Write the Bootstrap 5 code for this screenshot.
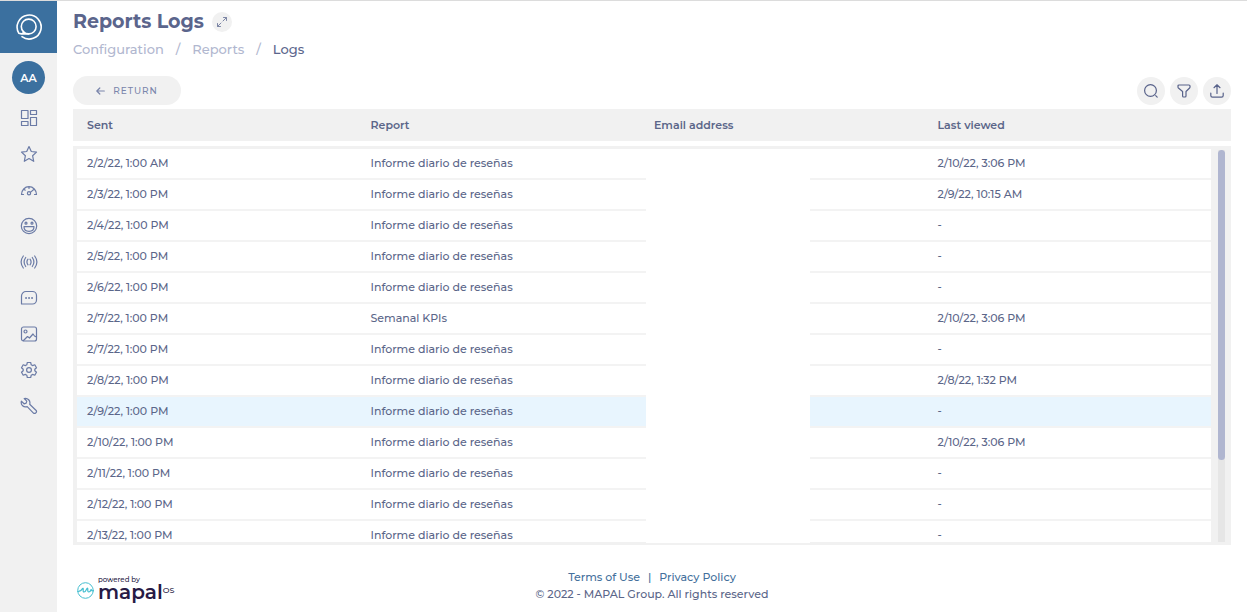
<!DOCTYPE html>
<html lang="en">
<head>
<meta charset="utf-8">
<meta name="viewport" content="width=device-width, initial-scale=1">
<title>Reports Logs</title>
<link href="https://cdn.jsdelivr.net/npm/bootstrap@5.3.0/dist/css/bootstrap.min.css" rel="stylesheet">
<style>
:root { --ink: #5b6689; --soft: #b1b7cf; --panel: #f1f1f1; --brand: #3b709f; }
body { font-family: Montserrat, Inter, "Liberation Sans", sans-serif; font-size: 11px; font-weight: 500; line-height: 16px; color: var(--ink); background: #fff; border-top: 1px solid #dcdcdc; }
svg { fill: none; stroke: currentColor; stroke-width: 1.2; stroke-linecap: round; stroke-linejoin: round; display: block; }
a { color: inherit; text-decoration: none; }
.side { width: 57px; background: var(--panel); }
.side-logo { height: 52px; background: var(--brand); color: #fff; }
.avatar { width: 33px; height: 33px; background: var(--brand); color: #fff; font-weight: 600; margin-top: 8px; margin-bottom: 6px; }
.side-link { height: 36px; color: #6b7ba6; }
.page-title { font-size: 19px; line-height: 24px; font-weight: 700; color: #5b658c; }
.crumbs { font-size: 13px; font-weight: 500; line-height: 16px; color: var(--soft); --bs-breadcrumb-divider-color: var(--soft); --bs-breadcrumb-item-padding-x: 12px; --bs-breadcrumb-font-size: 13px; --bs-breadcrumb-item-active-color: #5b658c; }
.page-head { padding-top: 9px; }
.crumb-nav { margin-top: 7px; }
.round-btn { width: 28px; height: 28px; background: var(--panel); color: #58628a; }
.tool-group { gap: 5px; }
.expand-btn { width: 20px; height: 20px; background: var(--panel); color: #7d86a5; }
.return-btn { width: 108px; height: 29px; background: var(--panel); color: #7a85ab; font-size: 9px; font-weight: 500; letter-spacing: 1px; }
.tools { margin-top: 19px; margin-bottom: 4px; }
.log-table { table-layout: fixed; margin: 0; color: inherit; border-collapse: separate; border-spacing: 0; width: 100%; }
.log-table th, .log-table td { padding: 0 0 0 10px; vertical-align: middle; text-align: left; }
.head-bar { background: var(--panel); padding: 0 20px 0 4px; margin-bottom: 5px; }
.head-bar th { height: 32px; font-weight: 600; }
.log-panel { background: var(--panel); padding: 3px 5px 3px 4px; min-height: 0; }
.log-view { background: #fff; min-height: 0; }
.log-table td { height: 31px; padding-bottom: 2px; border-bottom: 2px solid #f3f3f3; }
.log-view .picked td { background: #e8f5fe; }
.email-cover { top: 3px; bottom: 2px; left: calc(50% - 6px); width: 164px; background: #fff; }
.track { width: 7px; background: #e6e6e6; margin: 1px 1px 0 7px; }
.thumb { height: 79%; background: #b0b6d0; border-radius: 4px; }
.foot { height: 68px; padding-top: 24px; line-height: 17px; }
.foot-links { color: #44709c; }
.brand-mark { left: 4px; top: 31px; color: #271a45; }
.brand-small { font-size: 7px; line-height: 8px; }
.brand-word { font-size: 20px; line-height: 16px; font-weight: 600; }
.brand-os { font-size: 8px; line-height: 10px; font-weight: 500; margin-top: 1px; }
.wave { color: #46bfd0; margin-top: 6px; }
</style>
</head>
<body>
<div class="d-flex vh-100 overflow-hidden">
  <aside class="side flex-shrink-0">
    <a href="#" class="side-logo d-flex align-items-center justify-content-center" aria-label="Home">
      <svg width="28" height="28" viewBox="0 0 28 28"><path stroke-width="1.6" d="M7 23.700A12 12 0 1 0 3.900 20.300L6.300 20.900H13.700M6.300 20.900Q8.600 20.300 8.500 18.500"/><circle stroke-width="1.6" cx="13.700" cy="13.500" r="7.400"/></svg>
    </a>
    <div class="avatar rounded-circle d-flex align-items-center justify-content-center mx-auto">AA</div>
    <nav aria-label="Main">
      <a href="#" class="side-link d-flex align-items-center justify-content-center" aria-label="Dashboard"><svg width="18" height="18" viewBox="0 0 18 18"><path d="M1.500 1.500h6.500v8h-6.500zM10.500 1.500h6v4h-6zM1.500 12.500h6.500v4h-6.500zM10.500 8.500h6v8h-6z"/></svg></a>
      <a href="#" class="side-link d-flex align-items-center justify-content-center" aria-label="Favourites"><svg width="18" height="18" viewBox="0 0 18 18"><path d="M9 1.500l2.300 5 5.200.6-3.900 3.600 1.100 5.600L9 13.600l-4.700 2.700 1.100-5.600L1.500 7.100l5.200-.6z"/></svg></a>
      <a href="#" class="side-link d-flex align-items-center justify-content-center" aria-label="Performance"><svg width="18" height="18" viewBox="0 0 18 18"><path d="M3.500 13.500H1.500a7.500 7.800 0 0 1 15 0h-2M9 5.500v2M3.700 8l1.500 1.200M14.300 8l-3.900 3.400"/><circle cx="9" cy="12.300" r="1.600"/></svg></a>
      <a href="#" class="side-link d-flex align-items-center justify-content-center" aria-label="Satisfaction"><svg width="18" height="18" viewBox="0 0 18 18"><circle cx="9" cy="9" r="7.700"/><circle cx="6" cy="6.200" r="1"/><circle cx="12" cy="6.200" r="1"/><path d="M4 9.700h10q0 4.600-5 4.600t-5-4.600z"/></svg></a>
      <a href="#" class="side-link d-flex align-items-center justify-content-center" aria-label="Live"><svg width="18" height="18" viewBox="0 0 18 18"><path d="M3.300 3q-4.400 6 0 12M5.700 4.500q-3.200 4.500 0 9M8 6.200q-2.200 2.800 0 5.600M14.700 3q4.400 6 0 12M12.300 4.500q3.200 4.500 0 9M10 6.200q2.200 2.800 0 5.600"/></svg></a>
      <a href="#" class="side-link d-flex align-items-center justify-content-center" aria-label="Messages"><svg width="18" height="18" viewBox="0 0 18 18"><path d="M1.500 15V7a4.500 4.500 0 0 1 4.500-4.500h6.500A4 4 0 0 1 16.500 6.500v4.500a4 4 0 0 1-4 4z"/><path stroke-width="1.800" d="M6 9h.1M9 9h.1M12 9h.1"/></svg></a>
      <a href="#" class="side-link d-flex align-items-center justify-content-center" aria-label="Gallery"><svg width="18" height="18" viewBox="0 0 18 18"><rect x="1.500" y="2" width="15" height="14" rx="2"/><circle cx="5.500" cy="6.500" r="1.500"/><path d="M3.500 15.500l4-4 2 1.500 3.500-4 1.500 2 2 1"/></svg></a>
      <a href="#" class="side-link d-flex align-items-center justify-content-center" aria-label="Settings"><svg width="18" height="18" viewBox="0 0 18 18"><path d="M7.300 1.500h3.400l.5 2.300 1.300.8 2.300-.8 1.700 2.900-1.700 1.600v1.400l1.700 1.600-1.700 2.900-2.300-.8-1.300.8-.5 2.300H7.300l-.5-2.300-1.300-.8-2.300.8-1.700-2.900 1.700-1.600V8.300L1.500 6.700l1.700-2.900 2.300.8 1.300-.8z"/><circle cx="9" cy="9" r="2.400"/></svg></a>
      <a href="#" class="side-link d-flex align-items-center justify-content-center" aria-label="Tools"><svg width="18" height="18" viewBox="0 0 18 18"><path d="M4.200 1.500l2.600 2.700-.6 2-2.100.6-2.700-2.600a4.400 4.400 0 0 0 5.800 5.400l6 6.200a1.800 1.800 0 0 0 2.700-2.600l-6.200-6A4.500 4.500 0 0 0 4.200 1.500z"/></svg></a>
    </nav>
  </aside>

  <main class="d-flex flex-column flex-grow-1 px-3 overflow-hidden">
    <header class="page-head">
      <div class="d-flex align-items-center gap-2">
        <h1 class="page-title m-0">Reports Logs</h1>
        <button type="button" class="expand-btn btn p-0 border-0 rounded-circle d-flex align-items-center justify-content-center" aria-label="Expand"><svg width="12" height="12" viewBox="0 0 12 12"><path stroke-width="1" d="M7.500 1.500h3v3M10.500 1.500L7 5M4.500 10.500h-3v-3M1.500 10.500L5 7"/></svg></button>
      </div>
      <nav class="crumb-nav" aria-label="Breadcrumb">
        <ol class="breadcrumb crumbs m-0">
          <li class="breadcrumb-item"><a href="#">Configuration</a></li>
          <li class="breadcrumb-item"><a href="#">Reports</a></li>
          <li class="breadcrumb-item active" aria-current="page">Logs</li>
        </ol>
      </nav>
    </header>

    <div class="tools d-flex justify-content-between align-items-center">
      <button type="button" class="return-btn btn rounded-pill border-0 p-0 d-flex align-items-center justify-content-center gap-2"><svg width="9" height="8" viewBox="0 0 9 8"><path d="M8.300 4H1M3.800 1L.8 4l3 3"/></svg>RETURN</button>
      <div class="tool-group d-flex">
        <button type="button" class="round-btn btn p-0 border-0 rounded-circle d-flex align-items-center justify-content-center" aria-label="Search"><svg width="16" height="16" viewBox="0 0 16 16"><circle cx="7.500" cy="7.500" r="5.900"/><path d="M12.700 12.700l1.500 1.500"/></svg></button>
        <button type="button" class="round-btn btn p-0 border-0 rounded-circle d-flex align-items-center justify-content-center" aria-label="Filter"><svg width="16" height="16" viewBox="0 0 16 16"><path d="M3 2h10q1 0 1 1v1q0 .6-.4 1L10 8.500V13q0 1-1 1H7.500q-.9 0-.9-1V8.500L2.400 5Q2 4.600 2 4V3q0-1 1-1z"/></svg></button>
        <button type="button" class="round-btn btn p-0 border-0 rounded-circle d-flex align-items-center justify-content-center" aria-label="Export"><svg width="16" height="16" viewBox="0 0 16 16"><path d="M8 10.500V2M5 4.700L8 1.800l3 2.900M1.800 10v2.500q0 1.700 1.700 1.700h9q1.700 0 1.700-1.700V10"/></svg></button>
      </div>
    </div>

    <div class="head-bar">
      <table class="log-table">
        <thead><tr><th scope="col">Sent</th><th scope="col">Report</th><th scope="col">Email address</th><th scope="col">Last viewed</th></tr></thead>
      </table>
    </div>

    <section class="log-panel position-relative d-flex flex-grow-1" aria-label="Log entries">
      <div class="log-view flex-grow-1 overflow-hidden">
        <table class="log-table">
          <tbody>
            <tr><td>2/2/22, 1:00 AM</td><td>Informe diario de reseñas</td><td></td><td>2/10/22, 3:06 PM</td></tr>
            <tr><td>2/3/22, 1:00 PM</td><td>Informe diario de reseñas</td><td></td><td>2/9/22, 10:15 AM</td></tr>
            <tr><td>2/4/22, 1:00 PM</td><td>Informe diario de reseñas</td><td></td><td>-</td></tr>
            <tr><td>2/5/22, 1:00 PM</td><td>Informe diario de reseñas</td><td></td><td>-</td></tr>
            <tr><td>2/6/22, 1:00 PM</td><td>Informe diario de reseñas</td><td></td><td>-</td></tr>
            <tr><td>2/7/22, 1:00 PM</td><td>Semanal KPIs</td><td></td><td>2/10/22, 3:06 PM</td></tr>
            <tr><td>2/7/22, 1:00 PM</td><td>Informe diario de reseñas</td><td></td><td>-</td></tr>
            <tr><td>2/8/22, 1:00 PM</td><td>Informe diario de reseñas</td><td></td><td>2/8/22, 1:32 PM</td></tr>
            <tr class="picked"><td>2/9/22, 1:00 PM</td><td>Informe diario de reseñas</td><td></td><td>-</td></tr>
            <tr><td>2/10/22, 1:00 PM</td><td>Informe diario de reseñas</td><td></td><td>2/10/22, 3:06 PM</td></tr>
            <tr><td>2/11/22, 1:00 PM</td><td>Informe diario de reseñas</td><td></td><td>-</td></tr>
            <tr><td>2/12/22, 1:00 PM</td><td>Informe diario de reseñas</td><td></td><td>-</td></tr>
            <tr><td>2/13/22, 1:00 PM</td><td>Informe diario de reseñas</td><td></td><td>-</td></tr>
          </tbody>
        </table>
      </div>
      <div class="track flex-shrink-0"><div class="thumb"></div></div>
      <div class="email-cover position-absolute"></div>
    </section>

    <footer class="foot position-relative flex-shrink-0 text-center">
      <div class="brand-mark position-absolute d-flex text-start">
        <svg class="wave" width="17" height="17" viewBox="0 0 17 17"><circle cx="8.500" cy="8.500" r="7.800" stroke-width="1"/><path d="M.8 9.500Q4 9.500 5.500 6.500q.7-.7.800.5-.5 3 .7 3 1.500-.2 3-3.500.8-.8.800.5-.3 3 1 3 1.500 0 2.300-2.500.5 1.500 2 1.500"/></svg>
        <div class="ms-1">
          <div class="brand-small">powered by</div>
          <div class="d-flex"><span class="brand-word">mapal</span><span class="brand-os">OS</span></div>
        </div>
      </div>
      <div class="foot-links d-flex justify-content-center gap-2"><a href="#">Terms of Use</a><span>|</span><a href="#">Privacy Policy</a></div>
      <div>© 2022 - MAPAL Group. All rights reserved</div>
    </footer>
  </main>
</div>
<script src="https://cdn.jsdelivr.net/npm/bootstrap@5.3.0/dist/js/bootstrap.bundle.min.js"></script>
</body>
</html>
